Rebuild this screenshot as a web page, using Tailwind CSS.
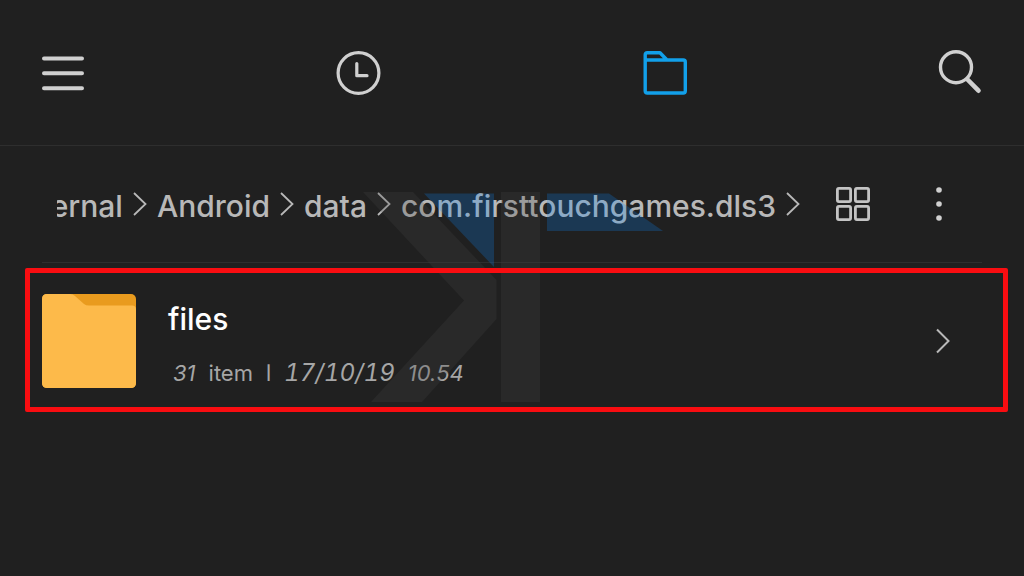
<!DOCTYPE html>
<html lang="en">

<head>
    <meta charset="UTF-8">
    <meta name="viewport" content="width=device-width, initial-scale=1.0">
    <script src="https://cdn.jsdelivr.net/npm/@tailwindcss/browser@4"></script>
    <title>File Manager</title>
</head>

<body class="relative min-h-screen bg-[#202020] font-['Inter',sans-serif] text-[#b8b8b8]">
    <header class="flex items-center justify-between border-b border-[#2e2e2e] px-[42px] py-[50px]">
        <button type="button" aria-label="Menu">
            <svg class="h-[45px] w-[42px]" viewBox="0 0 42 45" fill="none" stroke="#d0d0d0" stroke-width="4" stroke-linecap="round">
                <path d="M2 8.5H40M2 23.3H40M2 38.2H40" />
            </svg>
        </button>
        <nav class="flex w-3/8 justify-between">
            <a href="#recent" aria-label="Recent">
                <svg class="h-[45px] w-[46px]" viewBox="0 0 46 45" fill="none" stroke="#d0d0d0" stroke-width="3.2" stroke-linecap="round" stroke-linejoin="round">
                    <circle cx="23.5" cy="23" r="20.4" />
                    <path d="M21.8 13.5V25.7H32" />
                </svg>
            </a>
            <a href="#storage" aria-label="Storage">
                <svg class="h-[45px] w-[46px]" viewBox="0 0 46 45" fill="none" stroke="#12a0ea" stroke-width="3.4" stroke-linejoin="round">
                    <path d="M4.2 10V4.7Q4.2 2.7 6.2 2.7H19L26 10H42.3Q44.3 10 44.3 12V41Q44.3 43 42.3 43H6.2Q4.2 43 4.2 41ZM4.2 10H26" />
                </svg>
            </a>
        </nav>
        <button type="button" aria-label="Search">
            <svg class="h-[45px] w-[44px]" viewBox="0 0 44 45" fill="none" stroke="#d0d0d0" stroke-linecap="round">
                <circle cx="18" cy="17.2" r="15.5" stroke-width="3.4" />
                <path d="M29.5 29.5L40.5 40.7" stroke-width="4.6" />
            </svg>
        </button>
    </header>

    <main>
        <div class="mx-[42px] flex h-[117px] items-center border-b border-[#2e2e2e] pr-[39px] pl-[15px]">
            <!-- long paths keep their end in view, the start is cut off -->
            <nav aria-label="Path" class="flex min-w-0 flex-1 items-center justify-end gap-[10px] overflow-hidden text-[30px] leading-10 font-medium">
                <a href="#internal" class="pt-1">ernal</a>
                <svg class="h-6 w-[14px] shrink-0" viewBox="0 0 14 24" fill="none" stroke="currentColor" stroke-width="1.8"><path d="M1 1L12.5 12L1 23" /></svg>
                <a href="#android" class="pt-1">Android</a>
                <svg class="h-6 w-[14px] shrink-0" viewBox="0 0 14 24" fill="none" stroke="currentColor" stroke-width="1.8"><path d="M1 1L12.5 12L1 23" /></svg>
                <a href="#data" class="pt-1">data</a>
                <svg class="h-6 w-[14px] shrink-0" viewBox="0 0 14 24" fill="none" stroke="currentColor" stroke-width="1.8"><path d="M1 1L12.5 12L1 23" /></svg>
                <a href="#dls3" class="pt-1">com.firsttouchgames.dls3</a>
                <svg class="h-6 w-[14px] shrink-0" viewBox="0 0 14 24" fill="none" stroke="currentColor" stroke-width="1.8"><path d="M1 1L12.5 12L1 23" /></svg>
            </nav>
            <button type="button" aria-label="Grid view" class="ml-9">
                <svg class="h-[34px] w-[34px]" viewBox="0 0 34 34" fill="none" stroke="#c4c4c4" stroke-width="2.8">
                    <rect x="1.4" y="1.4" width="13.2" height="13.2" rx="1.5" />
                    <rect x="19.4" y="1.4" width="13.2" height="13.2" rx="1.5" />
                    <rect x="1.4" y="19.4" width="13.2" height="13.2" rx="1.5" />
                    <rect x="19.4" y="19.4" width="13.2" height="13.2" rx="1.5" />
                </svg>
            </button>
            <button type="button" aria-label="More options" class="ml-[65px]">
                <svg class="h-[34px] w-2" viewBox="0 0 8 34" fill="#d0d0d0">
                    <circle cx="4" cy="3" r="2.8" />
                    <circle cx="4" cy="17" r="2.8" />
                    <circle cx="4" cy="31" r="2.8" />
                </svg>
            </button>
        </div>

        <ul class="mt-[5px] mr-4 ml-[25px]">
            <li class="relative">
                <a href="#files" class="flex items-center pt-[26px] pr-[58px] pb-6 pl-[17px]">
                    <svg class="h-[94px] w-[94px] shrink-0" viewBox="0 0 94 94">
                        <rect width="94" height="94" rx="5" fill="#e99b1e" />
                        <path d="M5 0H28Q31 0 33 2L42 10Q44 11.5 47 11.5H90Q94 11.5 94 15.5V89Q94 94 89 94H5Q0 94 0 89V5Q0 0 5 0Z" fill="#fdba4a" />
                    </svg>
                    <div class="ml-8 flex flex-1 flex-col gap-[22px] pt-1.5">
                        <span class="text-[30px] leading-9 font-medium text-white">files</span>
                        <span class="flex items-center gap-[13px] pl-[5px] text-[22px] leading-7 text-[#a6a6a6]">
                            <span class="italic">31</span>
                            <span>item</span>
                            <span class="text-[14px] font-bold">|</span>
                            <span class="text-[24px] italic tabular-nums">17/10/19</span>
                            <span class="italic">10.54</span>
                        </span>
                    </div>
                    <svg class="h-[26px] w-[14px] shrink-0" viewBox="0 0 14 26" fill="none" stroke="currentColor" stroke-width="2"><path d="M1 1.5L12.5 13L1 24.5" /></svg>
                </a>
                <div class="pointer-events-none absolute inset-0 z-20 rounded-[2px] border-5 border-[#f90d11]"></div>
            </li>
        </ul>
    </main>

    <!-- watermark -->
    <svg class="pointer-events-none absolute inset-x-0 top-[192px] z-10 mx-auto h-[210px] w-[302px]" viewBox="-2 0 302 210" fill-opacity="0.25" aria-hidden="true">
        <path d="M0 0H50L133.5 88V127L59 210H8L101 108.5Z" fill="#434343" />
        <path d="M138 0H177V210H138Z" fill="#434343" />
        <path d="M61 1.5H131V75Z" fill="#0c80eb" />
        <path d="M184 1.5H246L300 39H184Z" fill="#0c80eb" />
    </svg>
</body>

</html>
